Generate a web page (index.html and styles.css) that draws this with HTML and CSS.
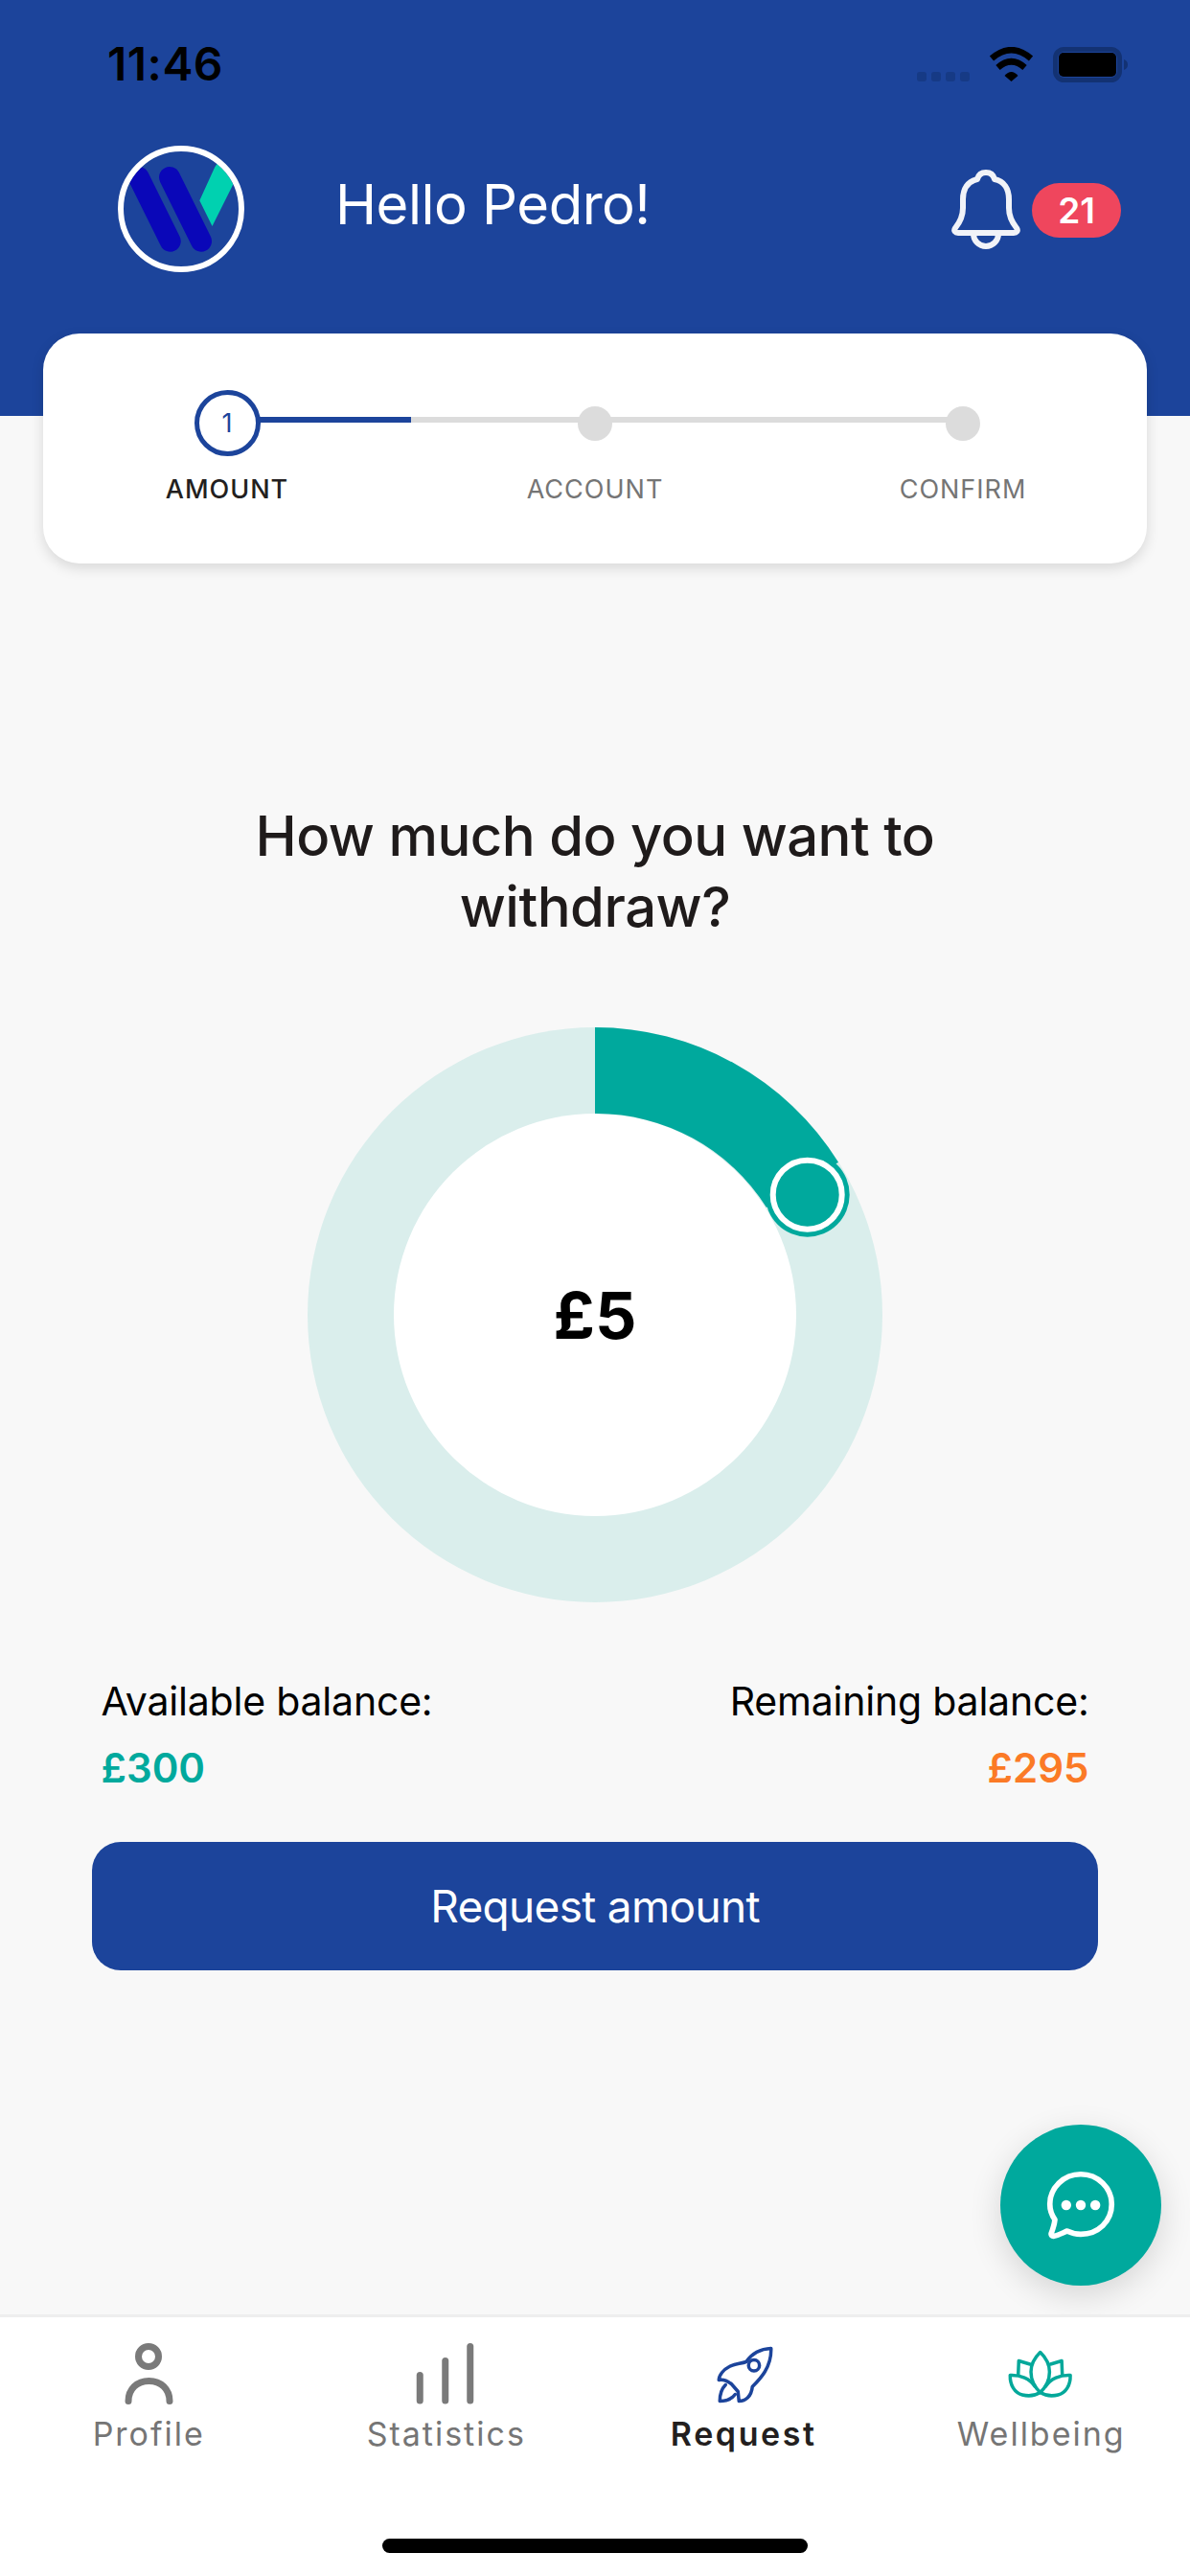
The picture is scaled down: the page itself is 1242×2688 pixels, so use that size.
FILE: index.html
```html
<!DOCTYPE html>
<html lang="en">
<head>
<meta charset="utf-8">
<title>Request amount</title>
<link rel="stylesheet" href="styles.css">
</head>
<body>
<div class="app">
  <header class="header">
    <div class="status">
      <span class="time">11:46</span>
      <div class="status-icons">
        <div class="signal"><i></i><i></i><i></i><i></i></div>
        <svg class="wifi" width="47" height="36" viewBox="0 0 47 36">
          <path d="M3 12Q23.5-5.6 44 12" fill="none" stroke="#000" stroke-width="6.5"/>
          <path d="M9.5 21.5Q23.5 9 37.5 21.5" fill="none" stroke="#000" stroke-width="6.5"/>
          <path d="M16.5 30Q23.5 22 30.5 30L23.5 36Z" fill="#000"/>
        </svg>
        <svg class="battery" width="79" height="37" viewBox="0 0 79 37">
          <rect x="2.5" y="2.5" width="67" height="32" rx="9" fill="none" stroke="#133273" stroke-width="5"/>
          <rect x="6" y="6" width="60" height="25" rx="5" fill="#000"/>
          <path d="M74 13C77 14 78 16 78 18.500C78 21 77 23 74 24Z" fill="#133273"/>
        </svg>
      </div>
    </div>
    <div class="topbar">
      <svg class="logo" width="132" height="132" viewBox="0 0 132 132">
        <defs><clipPath id="logo-clip"><circle cx="66" cy="66" r="60"/></clipPath></defs>
        <g clip-path="url(#logo-clip)">
          <path d="M54.700 99.700L21.700 33" stroke="#0a07b8" stroke-width="22" stroke-linecap="round" fill="none"/>
          <path d="M87 99.700L54 33" stroke="#0a07b8" stroke-width="22" stroke-linecap="round" fill="none"/>
          <path d="M85.300 57.300L98.500 84L121 39L108 15Q103 18 100 25Z" fill="#00d1b0"/>
        </g>
        <circle cx="66" cy="66" r="63" fill="none" stroke="#fff" stroke-width="6"/>
      </svg>
      <h1 class="greeting">Hello Pedro!</h1>
      <div class="notify">
        <svg class="bell" width="72" height="84" viewBox="0 0 72 84" fill="none" stroke="#f1f3f8" stroke-width="6" stroke-linejoin="round">
          <path d="M36 3C31 3 28 6 27 10C17 12 12 20 12 31L12 40C12 50 8 56 4 61C2 64 4 66 7 66L65 66C68 66 70 64 68 61C64 56 60 50 60 40L60 31C60 20 55 12 45 10C44 6 41 3 36 3Z"/>
          <path d="M23 67A13 13 0 0 0 49 67"/>
        </svg>
        <span class="badge">21</span>
      </div>
    </div>
  </header>

  <section class="stepper">
    <div class="step step-active">
      <div class="marker"><span class="marker-ring">1</span></div>
      <span class="step-label">AMOUNT</span>
      <span class="rail rail-progress"></span>
    </div>
    <div class="step">
      <div class="marker"><span class="marker-dot"></span></div>
      <span class="step-label">ACCOUNT</span>
      <span class="rail rail-next"></span>
    </div>
    <div class="step">
      <div class="marker"><span class="marker-dot"></span></div>
      <span class="step-label">CONFIRM</span>
    </div>
  </section>

  <main class="content">
    <h2 class="question">How much do you want to<br>withdraw?</h2>
    <div class="dial">
      <svg class="dial-svg" width="600" height="600" viewBox="0 0 600 600">
        <circle cx="300" cy="300" r="300" fill="#daeeec"/>
        <circle cx="300" cy="300" r="210" fill="#fff"/>
        <path d="M300 0A300 300 0 0 1 554 140.700L479 188A210 210 0 0 0 300 90Z" fill="#00a99d"/>
        <circle cx="521.700" cy="174.700" r="44" fill="#00a99d"/>
        <circle cx="521.700" cy="174.700" r="36" fill="#00a99d" stroke="#fff" stroke-width="6"/>
      </svg>
      <span class="dial-value">£5</span>
    </div>
    <div class="balances">
      <div class="balance">
        <span class="balance-label">Available balance:</span>
        <span class="balance-value value-available">£300</span>
      </div>
      <div class="balance balance-right">
        <span class="balance-label">Remaining balance:</span>
        <span class="balance-value value-remaining">£295</span>
      </div>
    </div>
    <button class="cta">Request amount</button>
  </main>

  <button class="fab" aria-label="Chat">
    <svg width="74" height="74" viewBox="0 0 78 78" fill="none">
      <path d="M39 5C20 5 5 20 5 38C5 45 7 50 10.500 55C10 60 8 66 6.500 70C6 72 7.500 73.500 9.500 73C15 72 20 69 24 67.500C29 70 33 71 39 71C58 71 73 57 73 38C73 20 58 5 39 5Z" stroke="#fff" stroke-width="6" stroke-linejoin="round"/>
      <circle cx="23" cy="39" r="5.500" fill="#fff"/>
      <circle cx="39" cy="39" r="5.500" fill="#fff"/>
      <circle cx="55" cy="39" r="5.500" fill="#fff"/>
    </svg>
  </button>

  <nav class="tabs">
    <div class="tab">
      <svg class="tab-icon" width="85" height="70" viewBox="0 0 85 70" fill="none" stroke="#7a7a7a" stroke-width="7" stroke-linecap="round">
        <circle cx="42" cy="17" r="10.500"/>
        <path d="M21 63.500C21 51 30 42.500 42.500 42.500C55 42.500 64 51 64 63.500"/>
      </svg>
      <span class="tab-label">Profile</span>
    </div>
    <div class="tab">
      <svg class="tab-icon" width="85" height="70" viewBox="0 0 85 70" fill="none" stroke="#7a7a7a" stroke-width="7" stroke-linecap="round">
        <path d="M15.250 36.500V63"/>
        <path d="M41.750 21.500V63"/>
        <path d="M67.750 6.500V63"/>
      </svg>
      <span class="tab-label">Statistics</span>
    </div>
    <div class="tab tab-active">
      <svg class="tab-icon" width="85" height="70" viewBox="0 0 85 70" fill="none" stroke="#1c449b" stroke-width="3.500" stroke-linejoin="round" stroke-linecap="round">
        <g transform="translate(1.250 -6.500)">
          <path d="M69.500 15C58 15.500 49 21 43.500 29C38 31 31 31 26 34C20 37 15 43 15 48C19 47 24 49 28 52L35 60L36 70C43 70 49 65 50 55C58 47 70 35 69.500 15Z"/>
          <path d="M22 53C17 58 16 64 16 70C23 70 29 67 32 63"/>
          <circle cx="51.700" cy="32.700" r="5.700"/>
        </g>
      </svg>
      <span class="tab-label">Request</span>
    </div>
    <div class="tab">
      <svg class="tab-icon" width="85" height="70" viewBox="0 0 85 70" fill="none" stroke="#04a89a" stroke-width="3.500" stroke-linejoin="round" stroke-linecap="round">
        <g transform="translate(1 3)">
          <path d="M40.700 9.500C35 15 31 22 31 30C31 38 35 46 40.700 51.500C46.400 46 50.400 38 50.400 30C50.400 22 46.400 15 40.700 9.500Z"/>
          <path d="M40.700 51.500C35 55 28 55.500 22 54C14 52 9 44 9.300 33.500C20 33 30 37 35 45"/>
          <path d="M40.700 51.500C46.400 55 53.400 55.500 59.400 54C67.400 52 72.400 44 72.100 33.500C61.400 33 51.400 37 46.400 45"/>
          <path d="M30 22L18.300 18.500L17.700 33"/>
          <path d="M51.400 22L63.100 18.500L63.700 33"/>
        </g>
      </svg>
      <span class="tab-label">Wellbeing</span>
    </div>
    <span class="home-bar"></span>
  </nav>
</div>
</body>
</html>
```
FILE: styles.css
```css
* { box-sizing: border-box; }
html, body { margin: 0; padding: 0; }
body { font-family: Inter, "Noto Sans", sans-serif; background: #f8f8f8; }

.app {
  position: relative;
  width: 1242px;
  height: 2688px;
  display: flex;
  flex-direction: column;
  overflow: hidden;
  background: #f8f8f8;
}

/* Header */
.header { height: 434px; background: #1c449b; padding: 49px 64px 0 112px; }
.status { display: flex; justify-content: space-between; align-items: flex-start; height: 103px; }
.time { font-size: 48px; line-height: 36px; font-weight: 600; color: #000; letter-spacing: 0.5px; }
.status-icons { display: flex; align-items: flex-start; }
.signal { display: flex; gap: 5px; margin-top: 26px; margin-right: 20px; }
.signal i { width: 10px; height: 10px; border-radius: 3px; background: #163a85; }
.wifi { margin-right: 20px; }

.topbar { display: flex; align-items: center; margin-left: 11px; margin-right: 8px; height: 132px; }
.logo { flex: none; }
.greeting { margin: 0 0 10px 95px; flex: 1; font-size: 58px; line-height: 68px; font-weight: 400; letter-spacing: -0.5px; color: #fff; }
.notify { display: flex; align-items: center; gap: 12px; margin-top: 2px; }
.bell { flex: none; }
.badge {
  width: 93px; height: 57px; border-radius: 29px;
  background: #ef465d; color: #fff;
  display: flex; align-items: center; justify-content: center;
  font-size: 37px; font-weight: 600;
}

/* Stepper */
.stepper {
  position: relative;
  display: flex;
  margin: -86px 45px 0;
  height: 240px;
  padding-top: 59px;
  background: #fff;
  border-radius: 38px;
  box-shadow: 0 5px 14px rgba(0, 0, 0, .13);
}
.step { position: relative; flex: 1; display: flex; flex-direction: column; align-items: center; }
.marker { position: relative; z-index: 1; height: 69px; display: flex; align-items: center; justify-content: center; }
.marker-ring {
  width: 69px; height: 69px; border-radius: 50%;
  border: 5px solid #1c449b; background: #fff;
  color: #1c449b; font-size: 27px; line-height: 1;
  display: flex; align-items: center; justify-content: center;
}
.marker-dot { width: 36px; height: 36px; border-radius: 50%; background: #dcdcdc; }
.step-label { margin-top: 18px; font-size: 27px; line-height: 34px; letter-spacing: 1px; color: #757575; }
.step-active .step-label { color: #231f20; font-weight: 500; }
.rail { position: absolute; top: 28px; height: 6px; left: 50%; width: 100%; background: #dcdcdc; }
.rail-progress { background: linear-gradient(to right, #1c449b 192px, #dcdcdc 192px); }

/* Main */
.content { display: flex; flex-direction: column; align-items: center; }
.question {
  margin: 247px 0 0;
  text-align: center;
  font-size: 58px; line-height: 74px; font-weight: 500; letter-spacing: -0.5px;
  color: #1f1b1b;
}
.dial { position: relative; width: 600px; height: 600px; margin-top: 89px; }
.dial-svg { display: block; overflow: visible; }
.dial-value {
  position: absolute; inset: 0;
  display: flex; align-items: center; justify-content: center;
  font-size: 68px; font-weight: 700; color: #000;
}
.balances { display: flex; justify-content: space-between; width: 1031px; margin-top: 78px; }
.balance { display: flex; flex-direction: column; gap: 20px; }
.balance-right { align-items: flex-end; }
.balance-label { font-size: 41px; line-height: 50px; letter-spacing: -0.2px; color: #000; }
.balance-value { font-size: 42px; line-height: 50px; font-weight: 600; }
.value-available { color: #00a99d; }
.value-remaining { color: #fb7a26; }
.cta {
  width: 1050px; height: 134px; margin-top: 52px;
  border: 0; border-radius: 30px;
  background: #1c449b; color: #fff;
  font-family: inherit; font-size: 46px; font-weight: 400; letter-spacing: -0.7px;
}

/* Floating action */
.fab {
  position: absolute; left: 1044px; top: 2217px;
  width: 168px; height: 168px; padding: 0;
  border: 0; border-radius: 50%;
  background: #00a99d;
  box-shadow: 0 10px 34px rgba(0, 0, 0, .14);
  display: flex; align-items: center; justify-content: center;
}

/* Tabs */
.tabs {
  position: relative;
  margin-top: auto;
  height: 273px;
  padding-top: 24px;
  display: flex;
  background: #fff;
  border-top: 3px solid #eeeeee;
}
.tab { flex: 1; display: flex; flex-direction: column; align-items: center; }
.tab-icon { display: block; }
.tab-label { margin-top: 8px; font-size: 34px; line-height: 40px; letter-spacing: 2px; color: #757575; }
.tab-active .tab-label { font-weight: 600; letter-spacing: 2.6px; color: #231f20; }
.home-bar {
  position: absolute; left: 399px; bottom: 24px;
  width: 444px; height: 15px; border-radius: 8px; background: #000;
}
```
